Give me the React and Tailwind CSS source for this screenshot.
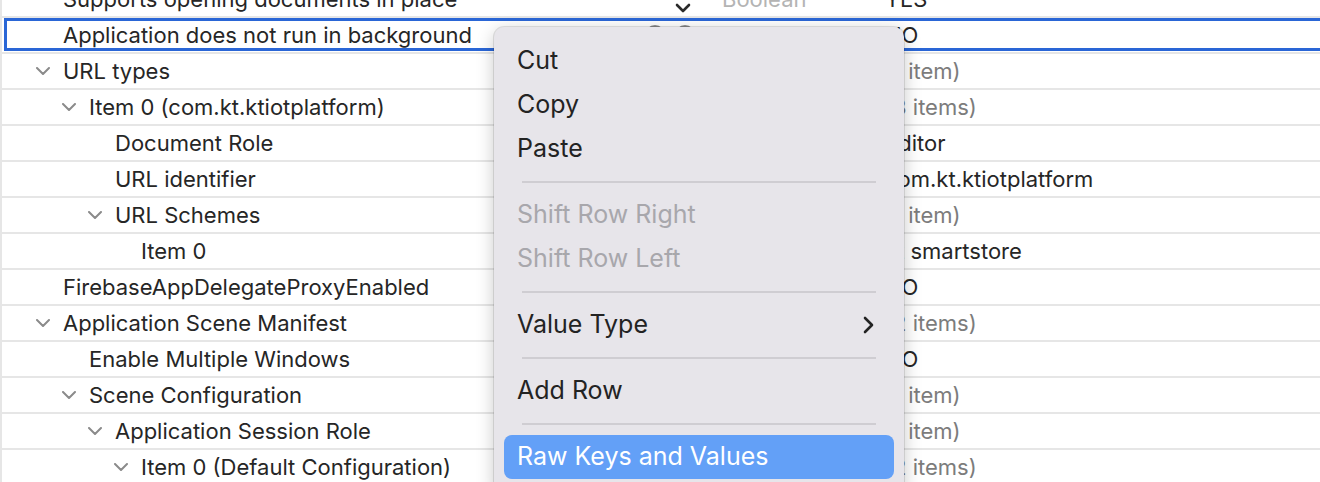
import { Fragment } from "react";

const ROWS = [
  { key: "Supports opening documents in place", level: 0, type: "Boolean", value: "YES" },
  { key: "Application does not run in background", level: 0, type: "Boolean", value: "NO", selected: true },
  { key: "URL types", level: 0, open: true, type: "Array", value: "(1 item)", muted: true },
  { key: "Item 0 (com.kt.ktiotplatform)", level: 1, open: true, type: "Dictionary", value: "(3 items)", muted: true },
  { key: "Document Role", level: 2, type: "String", value: "Editor" },
  { key: "URL identifier", level: 2, type: "String", value: "com.kt.ktiotplatform" },
  { key: "URL Schemes", level: 2, open: true, type: "Array", value: "(1 item)", muted: true },
  { key: "Item 0", level: 3, type: "String", value: "kt smartstore" },
  { key: "FirebaseAppDelegateProxyEnabled", level: 0, type: "Boolean", value: "NO" },
  { key: "Application Scene Manifest", level: 0, open: true, type: "Dictionary", value: "(2 items)", muted: true },
  { key: "Enable Multiple Windows", level: 1, type: "Boolean", value: "NO" },
  { key: "Scene Configuration", level: 1, open: true, type: "Dictionary", value: "(1 item)", muted: true },
  { key: "Application Session Role", level: 2, open: true, type: "Array", value: "(1 item)", muted: true },
  { key: "Item 0 (Default Configuration)", level: 3, open: true, type: "Dictionary", value: "(2 items)", muted: true },
];

const INDENT = ["pl-[34px]", "pl-[60px]", "pl-[86px]", "pl-[112px]"];

const MENU = [
  { label: "Cut" },
  { label: "Copy" },
  { label: "Paste" },
  { sep: true },
  { label: "Shift Row Right", disabled: true },
  { label: "Shift Row Left", disabled: true },
  { sep: true },
  { label: "Value Type", submenu: true },
  { sep: true },
  { label: "Add Row" },
  { sep: true },
  { label: "Raw Keys and Values", active: true },
];

function Disclosure() {
  return (
    <svg width="14" height="8" viewBox="0 0 14 8" fill="none" className="shrink-0">
      <path d="M1 1L7 7L13 1" stroke="#8b8b8b" strokeWidth="2" strokeLinecap="round" strokeLinejoin="round" />
    </svg>
  );
}

function RowControls() {
  return (
    <div className="ml-auto mr-[27px] flex items-center">
      <div className="mr-[16px] h-[6px] w-[3px] bg-[#333]" />
      <div className="flex h-[20px] w-[20px] items-center justify-center rounded-full border-2 border-[#8e8e8e] text-[14px] leading-none text-[#8e8e8e]">+</div>
      <div className="ml-[10px] flex h-[20px] w-[20px] items-center justify-center rounded-full border-2 border-[#8e8e8e] text-[14px] leading-none text-[#8e8e8e]">−</div>
    </div>
  );
}

function Row({ row, index }) {
  return (
    <div className="relative flex h-[36px] items-center border-b-2 border-[#e6e6e6]">
      <div className={`flex h-full w-[720px] shrink-0 items-center ${INDENT[row.level]}`}>
        <div className="flex w-[27px] shrink-0 items-center">{row.open && <Disclosure />}</div>
        <span className="whitespace-nowrap text-[#262626]">{row.key}</span>
        {row.selected && <RowControls />}
      </div>
      <div className="flex w-[163px] shrink-0 items-center">
        <span className={row.selected ? "text-[#6f6f6f]" : "text-[#b4b4b4]"}>{row.type}</span>
        {row.selected && (
          <svg width="10" height="16" viewBox="0 0 10 16" fill="none" className="ml-auto mr-[15px]">
            <path d="M2 6L5 3L8 6M2 10L5 13L8 10" stroke="#7a7a7a" strokeWidth="1.8" strokeLinecap="round" strokeLinejoin="round" />
          </svg>
        )}
      </div>
      <div className={`flex-1 whitespace-nowrap ${row.muted ? "text-[#7c7c7c]" : "text-[#262626]"}`}>{row.value}</div>

      {index === 0 && (
        <svg width="16" height="10" viewBox="0 0 16 10" fill="none" className="absolute left-[673px] top-[21px]">
          <path d="M2 2L8 8L14 2" stroke="#2b2b2b" strokeWidth="2.6" strokeLinecap="round" strokeLinejoin="round" />
        </svg>
      )}
      {row.selected && (
        <div className="pointer-events-none absolute -right-[10px] left-[2px] top-0 bottom-[1px] border-[3px] border-[#2a66d6]" />
      )}
    </div>
  );
}

function ContextMenu() {
  return (
    <div className="absolute left-[494px] top-[27px] h-[470px] w-[410px] rounded-[10px] bg-[#e7e5ea] pt-[12px] shadow-[0_4px_18px_rgba(0,0,0,0.22)] ring-1 ring-black/10">
      {MENU.map((item, i) =>
        item.sep ? (
          <div key={i} className="flex h-[22px] items-center px-[28px]">
            <div className="h-[2px] w-full bg-[#cfcdd2]" />
          </div>
        ) : (
          <div
            key={i}
            className={`mx-[10px] flex h-[44px] items-center rounded-[8px] px-[13px] text-[25px] ${
              item.active ? "bg-[#63a0f7] text-white" : item.disabled ? "text-[#a8a7ac]" : "text-[#232323]"
            }`}
          >
            <span>{item.label}</span>
            {item.submenu && (
              <svg width="12" height="18" viewBox="0 0 12 18" fill="none" className="ml-auto mr-[7px]">
                <path d="M3 2L10 9L3 16" stroke="#232323" strokeWidth="2.6" strokeLinecap="round" strokeLinejoin="round" />
              </svg>
            )}
          </div>
        )
      )}
    </div>
  );
}

export default function App() {
  return (
    <div className="relative h-[482px] w-[1320px] overflow-hidden bg-white font-['Inter',sans-serif] text-[22px]">
      <div className="-mt-[18px] border-l-2 border-[#e6e6e6]">
        {ROWS.map((row, i) => (
          <Fragment key={i}>
            <Row row={row} index={i} />
          </Fragment>
        ))}
      </div>
      <ContextMenu />
    </div>
  );
}
